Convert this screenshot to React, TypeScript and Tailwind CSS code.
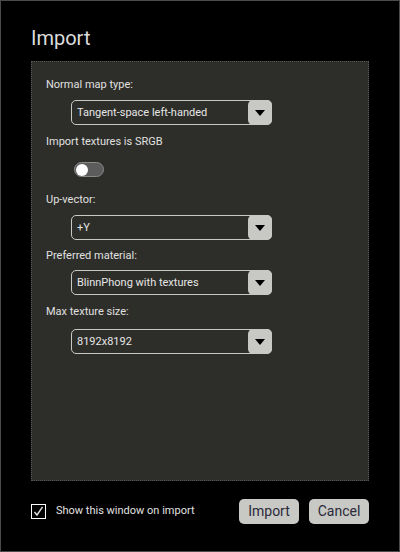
const font = { fontFamily: "Roboto, 'Liberation Sans', sans-serif" };

function Select({ value }: { value: string }) {
  return (
    <div className="ml-[25px] flex h-[25px] w-[201px] items-center rounded-[5px] border border-[#c8c8c4] bg-[#2d2d29]">
      <span className="flex-1 pl-[5px] text-[11px] leading-none text-[#e6e6e6]">{value}</span>
      <div className="flex h-[25px] w-[24px] -mr-px items-center justify-center rounded-[5px] bg-[#c8c8c4]">
        <svg width="10" height="6" viewBox="0 0 10 6">
          <path d="M0 0 H10 L5 6 Z" fill="#000" />
        </svg>
      </div>
    </div>
  );
}

function Label({ children }: { children: React.ReactNode }) {
  return <div className="text-[11px] leading-[13px] text-[#e0e0e0]">{children}</div>;
}

export default function App() {
  return (
    <div style={font} className="flex h-[552px] w-[400px] flex-col border border-[#4a4a4a] bg-black">
      <div className="pl-[30px] pt-[25px] text-[20px] leading-[24px] text-[#dcdcdc]">Import</div>
      <div className="ml-[30px] mt-[11px] h-[420px] w-[338px] border border-dotted border-[#555] bg-[#2d2d29] pl-[14px] pt-[16px]">
        <Label>Normal map type:</Label>
        <div className="mt-[9px]">
          <Select value="Tangent-space left-handed" />
        </div>
        <div className="mt-[10px]">
          <Label>Import textures is SRGB</Label>
        </div>
        <div className="ml-[28px] mt-[14px] flex h-[15px] w-[30px] items-center rounded-full border border-[#8a8a8a] bg-[#5c5c5c] p-[1px]">
          <div className="h-[12px] w-[12px] rounded-full bg-white" />
        </div>
        <div className="mt-[16px]">
          <Label>Up-vector:</Label>
        </div>
        <div className="mt-[9px]">
          <Select value="+Y" />
        </div>
        <div className="mt-[9px]">
          <Label>Preferred material:</Label>
        </div>
        <div className="mt-[8px]">
          <Select value="BlinnPhong with textures" />
        </div>
        <div className="mt-[10px]">
          <Label>Max texture size:</Label>
        </div>
        <div className="mt-[11px]">
          <Select value="8192x8192" />
        </div>
      </div>
      <div className="ml-[30px] mr-[30px] mt-[18px] flex items-center">
        <div className="flex h-[15px] w-[15px] items-center justify-center border border-white">
          <svg width="11" height="11" viewBox="0 0 11 11">
            <path d="M1.5 6 L4 9 L9.5 1" stroke="#e0e0e0" strokeWidth="1.4" fill="none" />
          </svg>
        </div>
        <span className="ml-[10px] flex-1 text-[11px] text-[#e0e0e0]">Show this window on import</span>
        <button className="h-[25px] w-[60px] rounded-[5px] bg-[#c8c8c4] text-[14px] text-[#2a2a3a]">Import</button>
        <button className="ml-[10px] h-[25px] w-[60px] rounded-[5px] bg-[#c8c8c4] text-[14px] text-[#2a2a3a]">Cancel</button>
      </div>
    </div>
  );
}
